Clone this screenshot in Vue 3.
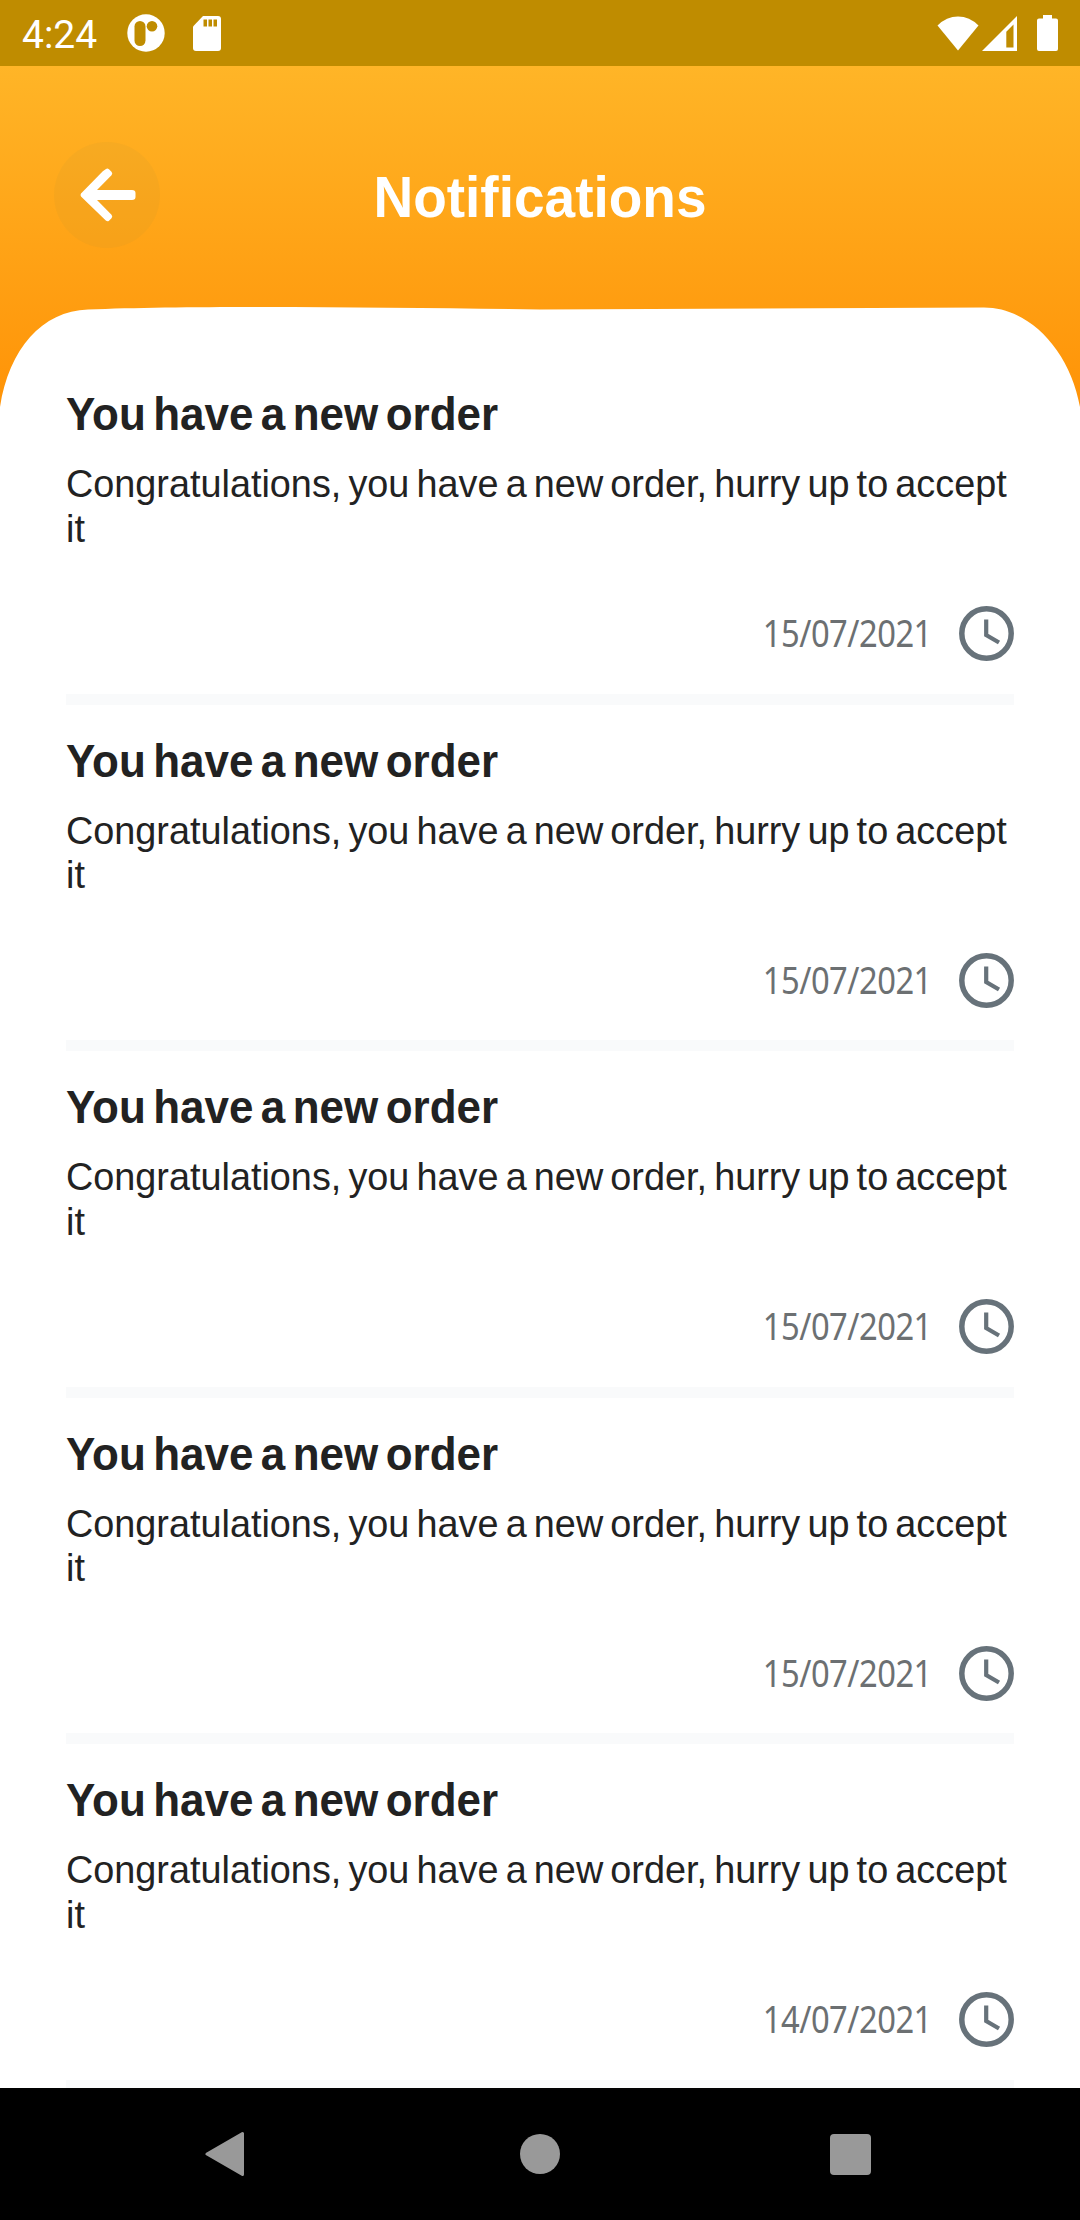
<script setup>
import { ref } from 'vue'

const title = 'You have a new order'
const body = 'Congratulations, you have a new order, hurry up to accept it'

const notifications = ref([
    { id: 1, title, body, date: '15/07/2021' },
    { id: 2, title, body, date: '15/07/2021' },
    { id: 3, title, body, date: '15/07/2021' },
    { id: 4, title, body, date: '15/07/2021' },
    { id: 5, title, body, date: '14/07/2021' },
])
</script>

<template>
    <div class="screen">
        <div class="status">
            <span class="time">4:24</span>
            <svg class="app-icon" width="38" height="38" viewBox="0 0 38 38">
                <circle cx="19" cy="19" r="18.7" fill="#fff" />
                <rect x="7.5" y="7" width="11" height="25" rx="5.5" fill="#bf8c00" />
                <circle cx="25" cy="12.3" r="5.3" fill="#bf8c00" />
            </svg>
            <svg class="sd-icon" width="28" height="35" viewBox="0 0 28 35">
                <path d="M10 0H25Q28 0 28 3V32Q28 35 25 35H3Q0 35 0 32V10.5Z" fill="#fff" />
                <path d="M10.5 3.5h3.5v7h-3.5zM15.5 3.5h3.5v7h-3.5zM20.5 3.5h3.5v7h-3.5z" fill="#bf8c00" />
            </svg>
            <div class="status-right">
                <svg width="42" height="35" viewBox="0 0 42 35">
                    <path d="M0.5 9.5Q9.5 0.5 21 0.5T41.5 9.5L21 34.5Z" fill="#fff" />
                </svg>
                <svg class="signal" width="35" height="35" viewBox="0 0 35 35">
                    <path d="M35 0V35H0ZM31.5 8.5L24.3 15.7V31.5H31.5Z" fill="#fff" fill-rule="evenodd" />
                </svg>
                <svg class="battery" width="21" height="36" viewBox="0 0 21 36">
                    <path d="M6 0h9v3.5h4q2 0 2 2V34q0 2-2 2H2q-2 0-2-2V5.5q0-2 2-2h4z" fill="#fff" />
                </svg>
            </div>
        </div>

        <header class="header">
            <div class="bar">
                <button class="back" aria-label="Back">
                    <svg width="56" height="54" viewBox="0 0 56 54">
                        <path d="M22.8 3.2L26 0.9Q27.5 0 29 1.2L31.5 3.8Q33 5.5 31.5 7.3L17 22H52Q55.5 22 55.5 25V29Q55.5 32 52 32H17L31.5 46.7Q33 48.5 31.5 50.2L29 52.8Q27.5 54 25.8 52.6L1 28.5Q0 27 1 25.5Z" fill="#fff" />
                    </svg>
                </button>
                <h1>Notifications</h1>
            </div>
            <svg class="curve" width="1080" height="101" viewBox="0 0 1080 101">
                <path d="M0 101C9 43 42 5 88 3.5C200 -1 400 1.5 540 3.5L984 1.5C1030 1.5 1070 45 1080 101Z" fill="#fff" />
            </svg>
        </header>

        <main class="list">
            <article v-for="n in notifications" :key="n.id" class="item">
                <h2>{{ n.title }}</h2>
                <p>{{ n.body }}</p>
                <div class="meta">
                    <span class="date">{{ n.date }}</span>
                    <svg width="55" height="55" viewBox="0 0 55 55" fill="none" stroke="#67727a">
                        <circle cx="27.5" cy="27.5" r="24.7" stroke-width="5.5" />
                        <path d="M27.2 13.5V29L40 36.5" stroke-width="4.2" />
                    </svg>
                </div>
            </article>
        </main>

        <nav class="nav">
            <svg width="40" height="46" viewBox="0 0 40 46">
                <path d="M2 23L37.5 2.5V43.5Z" fill="#999" stroke="#999" stroke-width="3" stroke-linejoin="round" />
            </svg>
            <span class="home"></span>
            <span class="recent"></span>
        </nav>
    </div>
</template>

<style>
body {
    margin: 0;
    background: #fff;
}
</style>

<style scoped>
.screen {
    width: 1080px;
    height: 2220px;
    display: flex;
    flex-direction: column;
    overflow: hidden;
    background: #fff;
    font-family: "Liberation Sans", Arial, sans-serif;
    font-variant-ligatures: none;
}

.status {
    flex: none;
    height: 66px;
    box-sizing: border-box;
    padding: 0 22px;
    display: flex;
    align-items: center;
    background: #bf8c00;
    color: #fff;
}

.time {
    width: 105px;
    font-family: Roboto, sans-serif;
    font-size: 39px;
    line-height: 46px;
    padding-top: 3px;
}

.sd-icon {
    margin-left: 28px;
}

.status-right {
    margin-left: auto;
    display: flex;
    align-items: center;
}

.signal {
    margin-left: 3px;
}

.battery {
    margin-left: 20px;
}

.header {
    flex: none;
    height: 341px;
    display: flex;
    flex-direction: column;
    background: linear-gradient(#ffb527, #ff9307);
}

.bar {
    height: 240px;
    box-sizing: border-box;
    padding: 76px 54px 0;
    display: grid;
    grid-template-columns: 106px 1fr 106px;
    align-items: start;
}

.back {
    width: 106px;
    height: 106px;
    padding: 0 0 0 2px;
    border: none;
    border-radius: 50%;
    background: rgba(170, 140, 60, 0.09);
    display: flex;
    align-items: center;
    justify-content: center;
}

h1 {
    margin: 22px 0 0;
    font-size: 57px;
    line-height: 66px;
    text-align: center;
    color: #fff;
    transform: scaleX(0.965);
}

.curve {
    display: block;
}

.list {
    flex: 1;
    min-height: 0;
    overflow: hidden;
    position: relative;
    margin-top: -49px;
    padding: 0 66px;
}

.item {
    height: 346.5px;
    box-sizing: border-box;
    padding-top: 29px;
    border-bottom: 11px solid #f9fafb;
    color: #222;
}

/* slightly narrowed letterforms with tight word gaps */
h2 {
    margin: 0;
    font-size: 46.5px;
    line-height: 54px;
    word-spacing: -5px;
    transform: scaleX(0.945);
    transform-origin: left;
}

p {
    width: 1000px;
    margin: 20px 0 0;
    font-size: 39.5px;
    line-height: 44.5px;
    word-spacing: -3.5px;
    transform: scaleX(0.957);
    transform-origin: left;
}

.meta {
    margin-top: 56px;
    display: flex;
    align-items: center;
    justify-content: flex-end;
    gap: 27px;
}

.date {
    font-family: "Noto Sans", "Open Sans", sans-serif;
    font-size: 38.5px;
    line-height: 53px;
    padding-bottom: 2px;
    letter-spacing: -0.6px;
    color: #6c7072;
    transform: scaleX(0.85);
    transform-origin: right;
}

.nav {
    flex: none;
    height: 132px;
    box-sizing: border-box;
    padding: 0 209px 0 205px;
    display: flex;
    align-items: center;
    justify-content: space-between;
    background: #000;
}

.home {
    width: 40px;
    height: 40px;
    margin-left: 5px;
    border-radius: 50%;
    background: #999;
}

.recent {
    width: 41px;
    height: 41px;
    border-radius: 4px;
    background: #999;
}
</style>
